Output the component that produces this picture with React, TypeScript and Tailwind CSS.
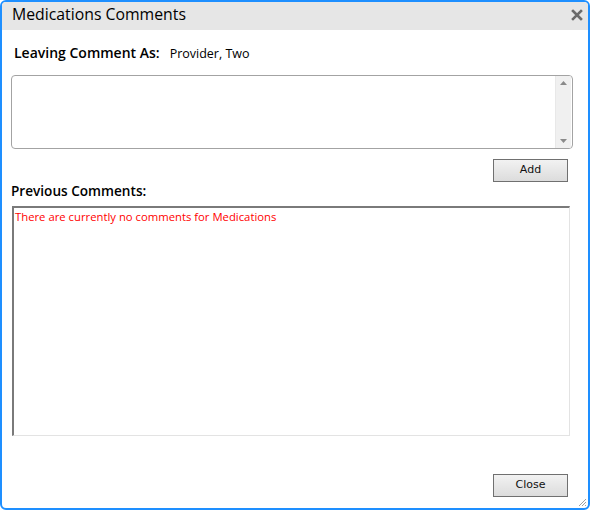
import React from "react";

export default function App() {
  return (
    <div className="w-[590px] h-[510px] bg-white" style={{ fontFamily: '"Open Sans", "Noto Sans", sans-serif' }}>
      <div className="w-[590px] h-[510px] border-2 border-[#1e8fff] rounded-[6px] flex flex-col overflow-hidden relative">
        <div className="h-[28px] bg-[#e6e6e6] flex items-center justify-between pl-[10px] pr-[4px] shrink-0">
          <span className="text-[15.8px] text-black leading-none -mt-[3px]">Medications Comments</span>
          <svg width="12" height="12" viewBox="0 0 12 12" className="mr-[1px] -mt-[2px]">
            <path d="M2 2 L10 10 M10 2 L2 10" stroke="#6b6b6b" strokeWidth="2.6" strokeLinecap="square" />
          </svg>
        </div>
        <div className="flex flex-col pl-[9px] pr-[15px]">
          <div className="flex items-baseline mt-[12px] ml-[3px] h-[20px]">
            <span className="text-[14px] text-black font-semibold">Leaving Comment As:</span>
            <span className="text-[12.5px] text-black ml-[10px]">Provider, Two</span>
          </div>
          <div className="mt-[13px] h-[74px] border border-[#a3a3a3] rounded-[4px] flex justify-end overflow-hidden">
            <div className="w-[16px] bg-[#f0f0f0] border-l border-[#e8e8e8] flex flex-col items-center justify-between py-[5px] mr-[1px]">
              <svg width="7" height="4" viewBox="0 0 7 4"><path d="M0 4 L3.5 0 L7 4 Z" fill="#8a8a8a" /></svg>
              <svg width="7" height="4" viewBox="0 0 7 4"><path d="M0 0 L3.5 4 L7 0 Z" fill="#8a8a8a" /></svg>
            </div>
          </div>
          <div className="flex justify-end mt-[10px] mr-[5px]">
            <button className="w-[75px] h-[23px] border border-[#707070] bg-gradient-to-b from-[#f2f2f2] to-[#dcdcdc] text-[11px] text-[#111]" style={{ fontFamily: '"DejaVu Sans", sans-serif' }}>
              Add
            </button>
          </div>
          <div className="-mt-[1px] text-[13.6px] text-black font-semibold leading-[20px]">Previous Comments:</div>
          <div className="mt-[5px] ml-[1px] mr-[3px] h-[230px] border-t-2 border-l-2 border-t-[#7a7a7a] border-l-[#7a7a7a] border-r border-b border-r-[#e3e3e3] border-b-[#e3e3e3] px-[1px] pt-[2px]">
            <div className="text-[11.3px] text-[#ff0000] leading-[14px]">There are currently no comments for Medications</div>
          </div>
          <div className="flex justify-end mt-[38px] mr-[5px]">
            <button className="w-[75px] h-[23px] border border-[#707070] bg-gradient-to-b from-[#f2f2f2] to-[#dcdcdc] text-[11px] text-[#111]" style={{ fontFamily: '"DejaVu Sans", sans-serif' }}>
              Close
            </button>
          </div>
        </div>
        <svg width="10" height="10" viewBox="0 0 10 10" className="absolute right-[1px] bottom-[1px]">
          <path d="M9 2 L2 9 M9 5 L5 9 M9 8 L8 9" stroke="#a0a0a0" strokeWidth="1" />
        </svg>
      </div>
    </div>
  );
}
